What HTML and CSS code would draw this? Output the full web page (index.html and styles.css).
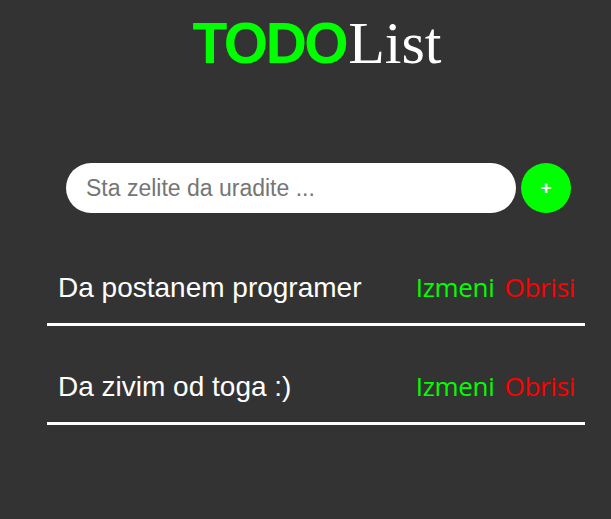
FILE: index.html
```html
<!DOCTYPE html>
<html>
<head>
<meta charset="utf-8">
<link rel="stylesheet" href="styles.css">
</head>
<body>
<div class="app">
  <h1 class="title"><span class="todo">TODO</span><span class="list">List</span></h1>
  <form class="add-form">
    <input class="add-input" type="text" placeholder="Sta zelite da uradite ...">
    <button class="add-btn" type="button">+</button>
  </form>
  <ul class="items">
    <li class="item">
      <span class="item-text">Da postanem programer</span>
      <span class="actions"><button class="edit">Izmeni</button><button class="del">Obrisi</button></span>
    </li>
    <li class="item">
      <span class="item-text">Da zivim od toga :)</span>
      <span class="actions"><button class="edit">Izmeni</button><button class="del">Obrisi</button></span>
    </li>
  </ul>
</div>
</body>
</html>
```
FILE: styles.css
```css
html, body {
  margin: 0;
  padding: 0;
  background: #333333;
}
.app {
  width: 538px;
  margin-left: 47px;
}
.title {
  margin: 13px 0 0;
  font-size: 60px;
  line-height: 60px;
  font-weight: normal;
  text-align: center;
  padding-left: 2px;
}
.todo {
  font-family: "Liberation Sans", Arial, sans-serif;
  font-weight: bold;
  color: #00ff00;
  font-size: 57px;
  letter-spacing: -2.5px;
}
.list {
  font-family: "Liberation Serif", "Times New Roman", serif;
  color: #ffffff;
  margin-left: 2px;
}
.add-form {
  display: flex;
  align-items: center;
  gap: 5px;
  margin: 90px 0 0 19px;
}
.add-input {
  box-sizing: border-box;
  width: 450px;
  height: 50px;
  border: none;
  border-radius: 25px;
  padding: 0 20px;
  font-family: "Liberation Sans", Arial, sans-serif;
  font-size: 23px;
  color: #333;
  background: #fff;
  outline: none;
}
.add-input::placeholder {
  color: #757575;
}
.add-btn {
  width: 50px;
  height: 50px;
  border: none;
  border-radius: 50%;
  background: #00ff00;
  color: #fff;
  font-family: "Liberation Sans", Arial, sans-serif;
  font-weight: bold;
  font-size: 19px;
  padding: 0;
}
.items {
  list-style: none;
  margin: 50px 0 0;
  padding: 0;
}
.item {
  display: flex;
  justify-content: space-between;
  align-items: center;
  height: 50px;
  padding: 0 10px 10px 11px;
  border-bottom: 3px solid #ffffff;
  margin-bottom: 36px;
}
.item-text {
  font-family: "Liberation Sans", Arial, sans-serif;
  font-size: 28px;
  color: #ffffff;
}
.actions {
  display: flex;
  gap: 10px;
  margin-top: -3px;
}
.actions button {
  border: none;
  background: none;
  padding: 0;
  font-family: "Open Sans", "Noto Sans", sans-serif;
  font-size: 26px;
  letter-spacing: -0.3px;
}
.edit { color: #00ff00; }
.del { color: #ff0000; }
```
